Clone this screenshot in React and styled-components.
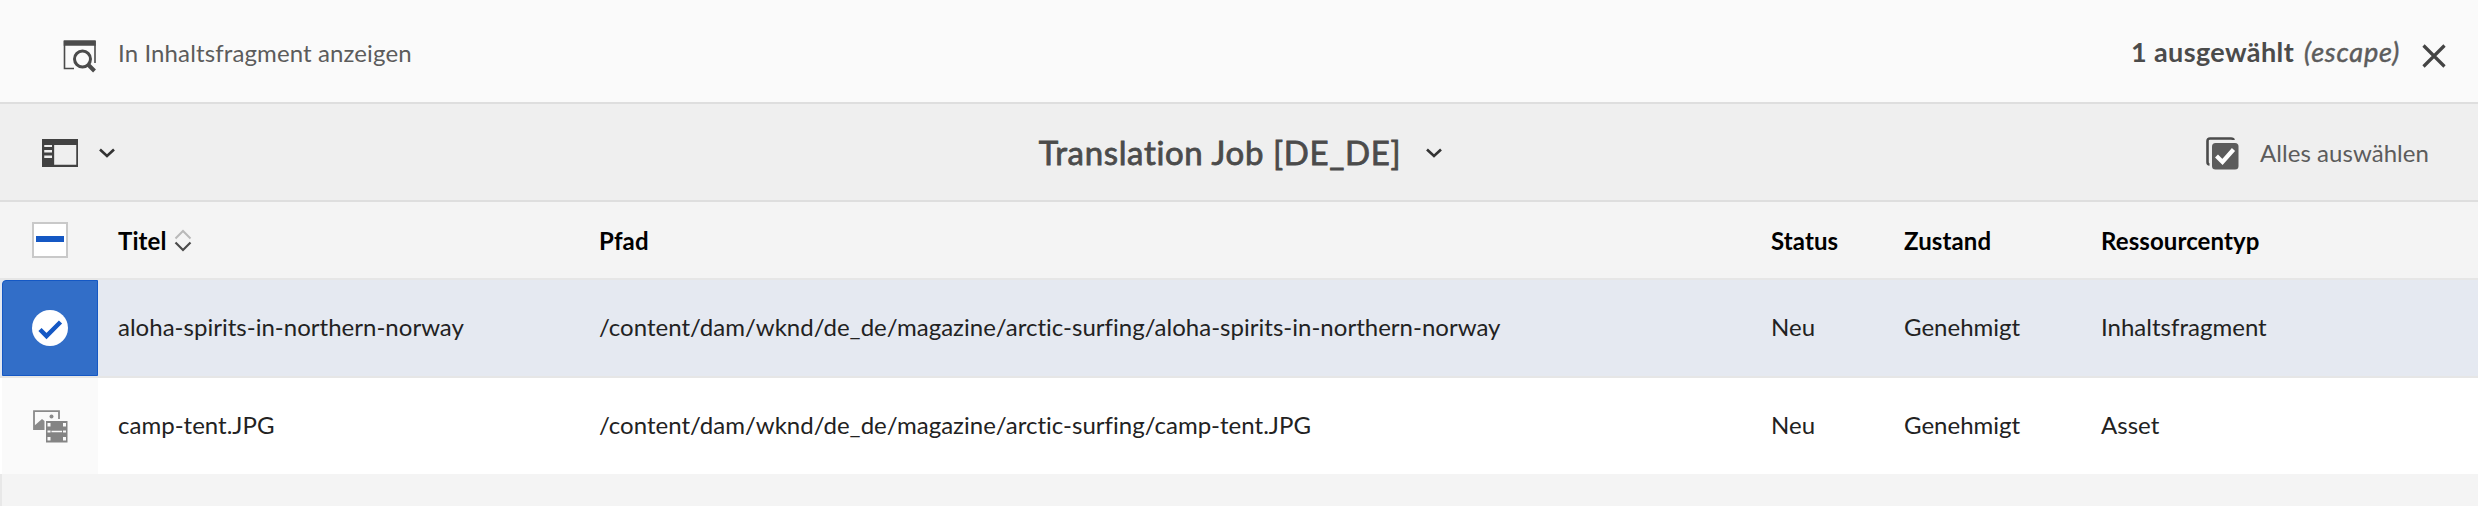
import React from "react";
import styled, { createGlobalStyle } from "styled-components";

const GlobalStyle = createGlobalStyle`
  *, *::before, *::after { box-sizing: border-box; }
  body {
    margin: 0;
    background: #f4f4f4;
    font-family: Lato, "Liberation Sans", sans-serif;
    font-size: 24px;
    font-variant-ligatures: none;
  }
`;

const Page = styled.main`
  display: flex;
  flex-direction: column;
  min-height: 506px;
  color: #222;
`;

const ActionBar = styled.header`
  display: flex;
  align-items: center;
  justify-content: space-between;
  height: 104px;
  padding: 10px 32px 0 63px;
  background: #fafafa;
  border-bottom: 2px solid #dedede;
`;

const TitleBar = styled.section`
  display: grid;
  grid-template-columns: 1fr auto 1fr;
  align-items: center;
  height: 98px;
  padding: 2px 49px 0 42px;
  background: #efefef;
  border-bottom: 2px solid #dedede;
`;

const Icon = styled.svg`
  display: block;
  flex: none;
`;

const Action = styled.button`
  display: flex;
  align-items: center;
  justify-self: ${(p) => p.$align || "start"};
  gap: ${(p) => p.$gap}px;
  padding: 0;
  border: 0;
  background: none;
  font: inherit;
  color: #5c5c5c;
`;

const Label = styled.span`
  line-height: 32px;
  white-space: nowrap;
  letter-spacing: ${(p) => p.$track || 0}px;
  transform: translateY(${(p) => p.$lift || 0}px);
`;

const Selection = styled.div`
  display: flex;
  align-items: center;
  font-size: 27px;
  color: #4b4b4b;
`;

const Count = styled(Label)`
  font-weight: 700;
  margin-right: 10px;
`;

const Hint = styled(Label)`
  font-style: italic;
  color: #5c5c5c;
  -webkit-text-stroke: 0.5px;
  margin-right: 22px;
`;

const Title = styled.h1`
  display: flex;
  align-items: center;
  gap: 24px;
  margin: 0;
  padding-left: 11px;
  font-size: 33px;
  font-weight: 400;
  color: #4b4b4b;
  -webkit-text-stroke: 0.8px;
`;

const Table = styled.div`
  display: flex;
  flex-direction: column;
`;

const Row = styled.div`
  display: grid;
  grid-template-columns: 98px 501px 1172px 133px 197px 1fr;
  align-items: center;
  height: ${(p) => p.$height}px;
  background: ${(p) => p.$bg};
  border-bottom: ${(p) => (p.$line ? "2px solid #e6e6e6" : "0")};
`;

const Cell = styled.div`
  display: flex;
  align-items: center;
  gap: 7px;
  padding-left: ${(p) => p.$inset || 0}px;
  padding-bottom: 2px;
  white-space: nowrap;
  line-height: 32px;
  letter-spacing: 0.015px;
`;

const HeadCell = styled(Cell)`
  font-weight: 700;
  color: #000;
  padding-top: 4px;
  letter-spacing: 0.1px;
`;

const Thumb = styled.div`
  display: grid;
  place-items: center;
  align-self: stretch;
  margin-left: 2px;
  background: ${(p) => (p.$selected ? "#326ec8" : "#fafafa")};
  border: ${(p) => (p.$selected ? "1px solid #1558c4" : "0")};
  border-top-left-radius: ${(p) => (p.$selected ? 4 : 0)}px;
`;

const CheckBox = styled.div`
  display: grid;
  place-items: center;
  width: 36px;
  height: 36px;
  margin-left: 32px;
  background: #fff;
  border: 2px solid #c9c9c9;

  &::before {
    content: "";
    width: 28px;
    height: 6px;
    margin-top: -2px;
    background: #1558c4;
  }
`;

const Filler = styled.div`
  flex: 1;
  border-left: 2px solid #e8e8e8;
`;

const ViewIcon = () => (
  <Icon width="34" height="34" viewBox="0 0 34 34" fill="none" stroke="#4b4b4b">
    <path d="M1.500 2v27.500h9.500M32 2v22" strokeWidth="1.600" />
    <path d="M0.700 4h32" strokeWidth="5.500" />
    <circle cx="19.500" cy="20" r="8" strokeWidth="3" />
    <path d="m25 25.500 6.500 6.500" strokeWidth="4" />
  </Icon>
);

const RailIcon = () => (
  <Icon width="36" height="28" viewBox="0 0 37 28" preserveAspectRatio="none">
    <path fill="#424242" fillRule="evenodd" d="M0 0h37v28H0zM12.500 6v19.800h22.700V6zM2.300 6v2h8V6zM2.300 11v2.500h8V11zM2.300 16.500V19h8v-2.500z" />
  </Icon>
);

const Chevron = () => (
  <Icon width="18" height="12" viewBox="0 0 18 12" fill="none" stroke="#333">
    <path d="m2 2.500 7 6.500 7-6.500" strokeWidth="2.600" />
  </Icon>
);

const CloseIcon = () => (
  <Icon width="24" height="24" viewBox="0 0 24 24" fill="none" stroke="#444">
    <path d="m1.500 1.500 21 21M22.500 1.500l-21 21" strokeWidth="3.200" />
  </Icon>
);

const SelectAllIcon = () => (
  <Icon width="33" height="33" viewBox="0 0 33 33" fill="none">
    <path d="M3.500 27.500Q1.500 27.500 1.500 25V4Q1.500 1.500 4 1.500H25Q27.500 1.500 27.500 3" stroke="#4b4b4b" strokeWidth="2.600" />
    <rect x="6" y="6" width="26.500" height="26.500" rx="3.500" fill="#5c5c5c" />
    <path d="m10.500 19 6 6 11-12.500" stroke="#fff" strokeWidth="4.200" />
  </Icon>
);

const SortIcon = () => (
  <Icon width="18" height="24" viewBox="0 0 18 24" fill="none">
    <path d="m1.500 9.500 7.500-7.500 7.500 7.500" stroke="#b9b9b9" strokeWidth="2" />
    <path d="m1.500 13.500 7.500 7.500 7.500-7.500" stroke="#4b4b4b" strokeWidth="2.200" />
  </Icon>
);

const CheckedIcon = () => (
  <Icon width="36" height="36" viewBox="0 0 36 36" fill="none">
    <circle cx="18" cy="18" r="18" fill="#fff" />
    <path d="m8 19.500 6.500 6.500L28.500 12" stroke="#1558c4" strokeWidth="4.500" />
  </Icon>
);

const AssetIcon = () => (
  <Icon width="35" height="33" viewBox="0 0 35 33" fill="none">
    <path d="M1 20V1.200H26V9" stroke="#8a8a8a" strokeWidth="1.800" />
    <path d="M1 20v-4l8-7 2.500 2v9z" fill="#8a8a8a" />
    <circle cx="18.500" cy="6.500" r="2" fill="#8a8a8a" />
    <path fill="#848484" fillRule="evenodd" d="M13 11h21.500v21.500H13zM14.500 13v3.500h3V13zM30 13v3.500h3V13zM14.500 20.500v2h3v-2zM30 20.500v2h3v-2zM14.500 27v3.500h3V27zM30 27v3.500h3V27zM18.500 20.700v1.600h10.500v-1.600z" />
  </Icon>
);

const rows = [
  {
    selected: true,
    title: "aloha-spirits-in-northern-norway",
    path: "/content/dam/wknd/de_de/magazine/arctic-surfing/aloha-spirits-in-northern-norway",
    status: "Neu",
    state: "Genehmigt",
    type: "Inhaltsfragment",
  },
  {
    selected: false,
    title: "camp-tent.JPG",
    path: "/content/dam/wknd/de_de/magazine/arctic-surfing/camp-tent.JPG",
    status: "Neu",
    state: "Genehmigt",
    type: "Asset",
  },
];

export default function App() {
  return (
    <Page>
      <GlobalStyle />
      <ActionBar>
        <Action $gap={21}>
          <ViewIcon />
          <Label $lift={-3} $track={0.12}>In Inhaltsfragment anzeigen</Label>
        </Action>
        <Selection>
          <Count $lift={-4} $track={0.4}>1 ausgewählt</Count>
          <Hint $lift={-4} $track={0.8}>(escape)</Hint>
          <CloseIcon />
        </Selection>
      </ActionBar>
      <TitleBar>
        <Action $gap={20}>
          <RailIcon />
          <Chevron />
        </Action>
        <Title>
          <Label $lift={-1} $track={0.65}>Translation Job [DE_DE]</Label>
          <Chevron />
        </Title>
        <Action $align="end" $gap={21}>
          <SelectAllIcon />
          <Label $track={0.05}>Alles auswählen</Label>
        </Action>
      </TitleBar>
      <Table>
        <Row $height={78} $bg="#f4f4f4" $line>
          <CheckBox />
          <HeadCell $inset={20}>
            Titel
            <SortIcon />
          </HeadCell>
          <HeadCell>Pfad</HeadCell>
          <HeadCell>Status</HeadCell>
          <HeadCell>Zustand</HeadCell>
          <HeadCell>Ressourcentyp</HeadCell>
        </Row>
        {rows.map((row) => (
          <Row key={row.title} $height={row.selected ? 98 : 96} $bg={row.selected ? "#e5e9f1" : "#fff"} $line={row.selected}>
            <Thumb $selected={row.selected}>{row.selected ? <CheckedIcon /> : <AssetIcon />}</Thumb>
            <Cell $inset={20}>{row.title}</Cell>
            <Cell>{row.path}</Cell>
            <Cell>{row.status}</Cell>
            <Cell>{row.state}</Cell>
            <Cell>{row.type}</Cell>
          </Row>
        ))}
      </Table>
      <Filler />
    </Page>
  );
}
